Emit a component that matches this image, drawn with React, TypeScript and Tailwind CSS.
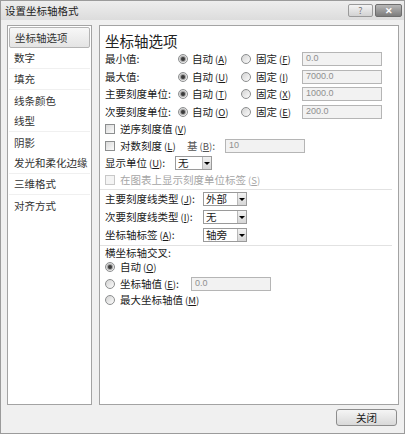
import type { ReactNode } from 'react';

const font = { fontFamily: '"Noto Sans CJK SC", "Noto Sans", sans-serif' };

function Radio({ checked = false }: { checked?: boolean }) {
  return (
    <span className="inline-flex w-[10px] h-[10px] shrink-0 items-center justify-center rounded-full border border-[#8c8e8f] bg-linear-to-br from-[#d3d3d3] to-[#fcfcfc]">
      {checked && <span className="w-[4px] h-[4px] rounded-full bg-[#3b3b3b] shadow-[0_0_1px_1px_#9a9a9a]" />}
    </span>
  );
}

function Check({ disabled = false }: { disabled?: boolean }) {
  return (
    <span
      className={`inline-block w-[10px] h-[10px] shrink-0 border ${
        disabled ? 'border-[#c8c8c8] bg-[#f4f4f4]' : 'border-[#8c8e8f] bg-linear-to-br from-[#dadada] to-[#fbfbfb]'
      }`}
    />
  );
}

function Key({ k }: { k: string }) {
  return (
    <span className="ml-[2px] text-[9.5px]">
      (<span className="underline">{k}</span>)
    </span>
  );
}

function Field({ value, w = 'w-[80px]' }: { value: string; w?: string }) {
  return (
    <span
      className={`${w} h-[14px] flex items-center pl-[3px] border border-[#b5b5b5] bg-[#f2f2f2] text-[#8f8f8f] text-[9px]`}
      style={{ fontFamily: '"Liberation Sans", sans-serif' }}
    >
      {value}
    </span>
  );
}

function Select({ value, w }: { value: string; w: string }) {
  return (
    <span className={`${w} h-[14px] flex items-center border border-[#9a9a9a] bg-white`}>
      <span className="flex-1 pl-[2px] leading-none">{value}</span>
      <span className="w-[9px] h-[12px] flex items-center justify-center border-l border-[#b9b9b9] bg-linear-to-b from-[#f2f2f2] to-[#d6d6d6]">
        <span className="w-0 h-0 border-l-[3px] border-r-[3px] border-t-[3px] border-l-transparent border-r-transparent border-t-black" />
      </span>
    </span>
  );
}

function ValueRow({ label, a, f, value, h }: { label: string; a: string; f: string; value: string; h: string }) {
  return (
    <div className={`${h} flex items-center`}>
      <span className="w-[73px]">{label}</span>
      <Radio checked />
      <span className="ml-[4px] w-[49px]">
        自动<Key k={a} />
      </span>
      <Radio />
      <span className="ml-[5px] w-[46px]">
        固定<Key k={f} />
      </span>
      <Field value={value} />
    </div>
  );
}

function Row({ h, children, className = '' }: { h: string; children: ReactNode; className?: string }) {
  return <div className={`${h} flex items-center ${className}`}>{children}</div>;
}

const navItems: { label: string; sep: boolean }[] = [
  { label: '坐标轴选项', sep: true },
  { label: '数字', sep: true },
  { label: '填充', sep: true },
  { label: '线条颜色', sep: false },
  { label: '线型', sep: true },
  { label: '阴影', sep: false },
  { label: '发光和柔化边缘', sep: true },
  { label: '三维格式', sep: true },
  { label: '对齐方式', sep: false },
];

export default function App() {
  return (
    <div
      className="w-[405px] h-[434px] flex flex-col bg-[#f0f0f0] border border-[#9b9b9b] text-[10.5px] text-[#1a1a1a] overflow-hidden"
      style={font}
    >
      {/* title bar */}
      <div className="h-[19px] flex items-center pl-[4px] pr-[2px] bg-linear-to-b from-[#eeeeee] to-[#dcdcdc] text-[#222]">
        <span className="flex-1">设置坐标轴格式</span>
        <span className="w-[25px] h-[13px] flex items-center justify-center rounded-[2px] border border-[#9a9a9a] bg-linear-to-b from-[#f4f4f4] to-[#d2d2d2] text-[9px] text-[#777]">
          ?
        </span>
        <span className="ml-[2px] w-[27px] h-[13px] flex items-center justify-center rounded-[2px] border border-[#6e6e6e] bg-linear-to-b from-[#b8b8b8] to-[#7d7d7d] text-[9px] font-bold text-white">
          ✕
        </span>
      </div>

      <div className="flex gap-[7px] pl-[6px] pt-[5px]">
        {/* left list */}
        <div className="w-[85px] h-[380px] border border-[#a3a3a3] bg-white pt-[1px] px-[1px]">
          {navItems.map((it, i) => (
            <div
              key={it.label}
              className={`h-[21px] flex items-center pl-[5px] ${
                i === 0
                  ? 'rounded-[2px] border border-[#b4b4b4] bg-linear-to-b from-[#f7f7f7] to-[#e4e4e4] text-[#333]'
                  : 'text-[#333]'
              } ${i > 0 && it.sep ? 'border-b border-[#f0f0f0]' : ''}`}
            >
              {it.label}
            </div>
          ))}
        </div>

        {/* right panel */}
        <div className="w-[300px] h-[380px] border border-[#a3a3a3] bg-white pl-[5px] pt-[6px]">
          <div className="h-[18px] flex items-center text-[14.5px] text-[#222]">坐标轴选项</div>
          <ValueRow label="最小值:" a="A" f="F" value="0.0" h="h-[18px]" />
          <ValueRow label="最大值:" a="U" f="I" value="7000.0" h="h-[17px]" />
          <ValueRow label="主要刻度单位:" a="T" f="X" value="1000.0" h="h-[18px]" />
          <ValueRow label="次要刻度单位:" a="O" f="E" value="200.0" h="h-[17px]" />
          <Row h="h-[18px]">
            <Check />
            <span className="ml-[5px]">
              逆序刻度值<Key k="V" />
            </span>
          </Row>
          <Row h="h-[16px]">
            <Check />
            <span className="ml-[5px] w-[67px]">
              对数刻度<Key k="L" />
            </span>
            <span className="w-[38px] text-[#555]">
              基<Key k="B" />:
            </span>
            <Field value="10" />
          </Row>
          <Row h="h-[18px]">
            <span className="w-[70px]">
              显示单位<Key k="U" />:
            </span>
            <Select value="无" w="w-[37px]" />
          </Row>
          <Row h="h-[16px]" className="text-[#a6a6a6]">
            <Check disabled />
            <span className="ml-[5px]">
              在图表上显示刻度单位标签<Key k="S" />
            </span>
          </Row>
          <div className="h-px -ml-[5px] mr-[6px] mt-[1px] bg-[#e2e2e2]" />
          <Row h="h-[18px]">
            <span className="w-[98px]">
              主要刻度线类型<Key k="J" />:
            </span>
            <Select value="外部" w="w-[44px]" />
          </Row>
          <Row h="h-[18px]">
            <span className="w-[98px]">
              次要刻度线类型<Key k="I" />:
            </span>
            <Select value="无" w="w-[44px]" />
          </Row>
          <Row h="h-[18px]">
            <span className="w-[98px]">
              坐标轴标签<Key k="A" />:
            </span>
            <Select value="轴旁" w="w-[44px]" />
          </Row>
          <div className="h-px -ml-[5px] mr-[6px] mt-[1px] bg-[#e2e2e2]" />
          <Row h="h-[13px]">横坐标轴交叉:</Row>
          <Row h="h-[16px]">
            <Radio checked />
            <span className="ml-[5px]">
              自动<Key k="O" />
            </span>
          </Row>
          <Row h="h-[17px]">
            <Radio />
            <span className="ml-[5px] w-[71px]">
              坐标轴值<Key k="E" />:
            </span>
            <Field value="0.0" />
          </Row>
          <Row h="h-[16px]">
            <Radio />
            <span className="ml-[5px]">
              最大坐标轴值<Key k="M" />
            </span>
          </Row>
        </div>
      </div>

      {/* footer */}
      <div className="flex justify-end pr-[7px] pt-[4px]">
        <button className="w-[61px] h-[17px] flex items-center justify-center rounded-[3px] border border-[#8d8d8d] bg-linear-to-b from-[#f5f5f5] to-[#d9d9d9] text-[10.5px]">
          关闭
        </button>
      </div>
    </div>
  );
}
